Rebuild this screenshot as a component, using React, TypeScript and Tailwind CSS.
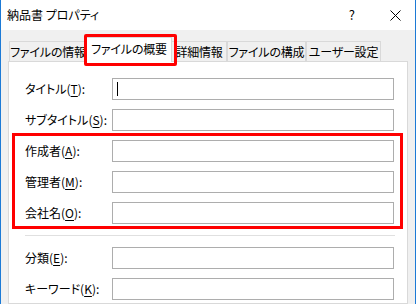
import { ReactNode } from "react";

const TABS = [
  { name: "ファイルの情報", w: "w-[78px]" },
  { name: "ファイルの概要", w: "w-[86px]", active: true },
  { name: "詳細情報", w: "w-[56px]" },
  { name: "ファイルの構成", w: "w-[79px]" },
  { name: "ユーザー設定", w: "w-[75px]" },
];

function Label({ text, keyChar }: { text: string; keyChar: string }) {
  return (
    <span className="w-[87px] shrink-0 whitespace-nowrap text-[12px] text-black">
      {text}(<span className="underline underline-offset-2">{keyChar}</span>):
    </span>
  );
}

function Field({
  text,
  keyChar,
  cursor,
}: {
  text: string;
  keyChar: string;
  cursor?: boolean;
}) {
  return (
    <div className="flex h-[22px] items-center">
      <Label text={text} keyChar={keyChar} />
      <div className="flex h-[22px] w-[282px] items-center border border-[#adadad] bg-white pl-[4px]">
        {cursor && <div className="h-[14px] w-px bg-black" />}
      </div>
    </div>
  );
}

function Group({ children }: { children: ReactNode }) {
  return <div className="flex flex-col gap-[9px]">{children}</div>;
}

export default function App() {
  return (
    <div className="h-[304px] w-[418px] overflow-hidden bg-white font-['Noto_Sans_CJK_JP',sans-serif] [font-feature-settings:'palt']">
      <div className="flex h-[304px] w-[416px] flex-col border-x border-[#1c7ad6]">
        {/* Title bar */}
        <div className="flex h-[30px] shrink-0 items-center bg-white pl-[6px]">
          <span className="text-[12px] text-black">納品書 プロパティ</span>
          <span className="ml-auto mr-[35px] text-[13px] text-black">?</span>
          <svg width="11" height="11" viewBox="0 0 11 11" className="mr-[14px]">
            <path d="M0.5 0.5L10.5 10.5M10.5 0.5L0.5 10.5" stroke="#000" strokeWidth="1" />
          </svg>
        </div>

        {/* Body */}
        <div className="relative flex flex-1 flex-col bg-[#f0f0f0] pl-[7px] pr-[7px]">
          {/* Tabs */}
          <div className="flex h-[32px] shrink-0 items-end pl-[1px]">
            {TABS.map((t) =>
              t.active ? (
                <div
                  key={t.name}
                  className={`relative z-10 -mx-px flex h-[25px] ${t.w} items-center justify-center whitespace-nowrap border-x border-t border-[#d9d9d9] bg-white pb-[2px] text-[12px] tracking-[-0.2px] text-black`}
                >
                  {t.name}
                </div>
              ) : (
                <div
                  key={t.name}
                  className={`flex h-[21px] ${t.w} items-center justify-center whitespace-nowrap border-x border-t border-[#d9d9d9] bg-[#f0f0f0] text-[12px] tracking-[-0.2px] text-black`}
                >
                  {t.name}
                </div>
              )
            )}
          </div>

          {/* Panel */}
          <div className="-mt-px flex flex-1 flex-col border border-[#d9d9d9] bg-white pl-[16px] pt-[16px]">
            <Group>
              <Field text="タイトル" keyChar="T" cursor />
              <Field text="サブタイトル" keyChar="S" />
              <Field text="作成者" keyChar="A" />
              <Field text="管理者" keyChar="M" />
              <Field text="会社名" keyChar="O" />
            </Group>
            <div className="my-[11px] h-px w-[370px] bg-[#e0e0e0]" />
            <Group>
              <Field text="分類" keyChar="E" />
              <Field text="キーワード" keyChar="K" />
            </Group>
          </div>

          {/* Highlight annotations */}
          <div className="pointer-events-none absolute left-[83px] top-[4px] z-20 h-[32px] w-[93px] rounded-[2px] border-[3px] border-[#ff0000]" />
          <div className="pointer-events-none absolute left-[11px] top-[103px] z-20 h-[96px] w-[391px] border-[3px] border-[#ff0000]" />
        </div>
      </div>
    </div>
  );
}
